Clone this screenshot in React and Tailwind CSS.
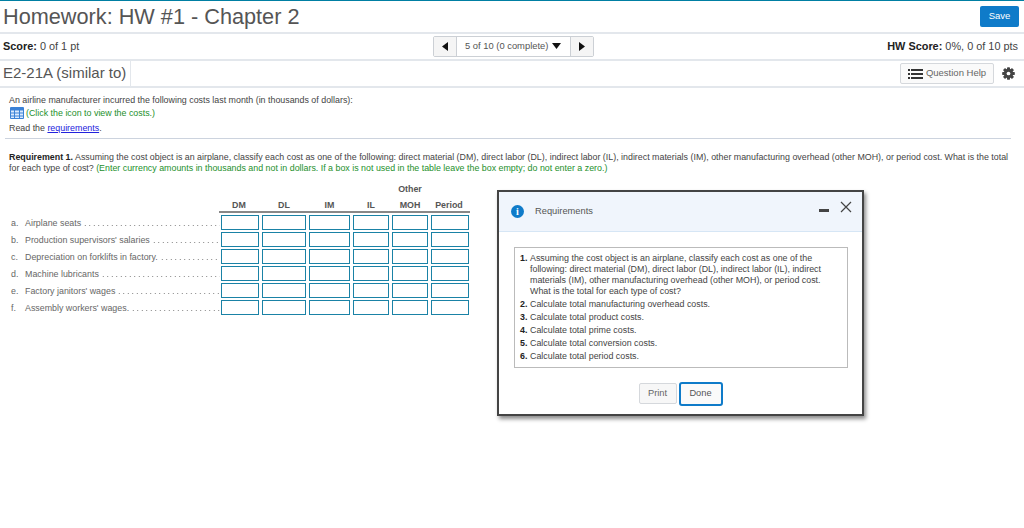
import React from "react";

const rows = [
  ["a.", "Airplane seats"],
  ["b.", "Production supervisors' salaries"],
  ["c.", "Depreciation on forklifts in factory."],
  ["d.", "Machine lubricants"],
  ["e.", "Factory janitors' wages"],
  ["f.", "Assembly workers' wages."],
];
const cols = ["DM", "DL", "IM", "IL", "MOH", "Period"];
const reqs = [
  "Calculate total manufacturing overhead costs.",
  "Calculate total product costs.",
  "Calculate total prime costs.",
  "Calculate total conversion costs.",
  "Calculate total period costs.",
];

function Tri({ d }) {
  return (
    <svg width="10" height="11" viewBox="0 0 10 11" className="block">
      <path d={d} fill="#111" />
    </svg>
  );
}

function Gear() {
  const teeth = [0, 45, 90, 135];
  return (
    <svg width="13" height="13" viewBox="0 0 14 14" className="block">
      {teeth.map((a) => (
        <rect key={a} x="5.4" y="0.2" width="3.2" height="13.6" rx="0.5" fill="#444" transform={`rotate(${a} 7 7)`} />
      ))}
      <circle cx="7" cy="7" r="5" fill="#444" />
      <circle cx="7" cy="7" r="2" fill="#fff" />
    </svg>
  );
}

function ListIcon() {
  return (
    <svg width="15" height="10" viewBox="0 0 15 10" className="block">
      <path d="M0 0h2v2H0zM3 0h12v2H3zM0 4h2v2H0zM3 4h12v2H3zM0 8h2v2H0zM3 8h12v2H3z" fill="#333" />
    </svg>
  );
}

function TableIcon() {
  return (
    <svg width="14" height="12" viewBox="0 0 14 12" className="block">
      <rect width="14" height="12" rx="1" fill="#3b82d6" />
      <path d="M1 3.5h3v2H1zM5 3.5h4v2H5zM10 3.5h3v2h-3zM1 6.5h3v2H1zM5 6.5h4v2H5zM10 6.5h3v2h-3zM1 9.5h3v1.5H1zM5 9.5h4v1.5H5zM10 9.5h3v1.5h-3z" fill="#dbeafe" />
    </svg>
  );
}

export default function App() {
  return (
    <div className="relative h-[528px] w-[1024px] overflow-hidden bg-white font-['Liberation_Sans',Arial,sans-serif] text-[#333]">
      <header className="flex h-[34px] items-center justify-between border-t border-[#007fa3] border-b-2 border-b-[#e3e7ec] pl-[3px] pr-[5px]">
        <h1 className="text-[21.7px] leading-none text-[#555]">Homework: HW #1 - Chapter 2</h1>
        <button className="h-[21px] w-[39px] rounded-[2px] bg-[#0f7bc9] text-[9.5px] text-white">Save</button>
      </header>

      <div className="grid h-[27px] grid-cols-[430px_auto_1fr] items-center border-b-2 border-[#e3e7ec] pl-[3px] pr-[6px] text-[10.9px] text-[#444]">
        <div><b className="text-[#222]">Score:</b> 0 of 1 pt</div>
        <div className="flex h-[21px] items-center rounded-[2px] border border-[#ccd0d5] bg-white">
          <span className="flex h-full w-[23px] items-center justify-center border-r border-[#ccd0d5] bg-[#f5f5f5]"><Tri d="M8 1v9L2 5.500z" /></span>
          <span className="flex items-center gap-[4px] whitespace-nowrap pl-[8px] pr-[9px] text-[9.4px] text-[#555]">
            5 of 10 (0 complete)
            <svg width="9" height="6" viewBox="0 0 9 6" className="block"><path d="M0 0h9L4.500 6z" fill="#111" /></svg>
          </span>
          <span className="flex h-full w-[23px] items-center justify-center border-l border-[#ccd0d5] bg-[#f5f5f5]"><Tri d="M2 1v9l6-4.500z" /></span>
        </div>
        <div className="text-right"><b className="text-[#222]">HW Score:</b> 0%, 0 of 10 pts</div>
      </div>

      <div className="flex h-[27px] items-center justify-between border-b-2 border-[#e3e7ec] pr-[9px]">
        <div className="flex h-full w-[131px] items-center border-r border-[#e3e7ec] pl-[3px] text-[15px] text-[#555]">E2-21A (similar to)</div>
        <div className="flex items-center gap-[8px]">
          <button className="flex h-[21px] w-[94px] items-center justify-center gap-[3px] rounded-[2px] border border-[#d5d8dc] bg-[#fafafa] text-[9.5px] text-[#666]">
            <ListIcon />Question Help
          </button>
          <Gear />
        </div>
      </div>

      <main className="px-[9px] text-[8.87px] leading-[11px]">
        <p className="mt-[7px] text-[#444]">An airline manufacturer incurred the following costs last month (in thousands of dollars):</p>
        <p className="mt-[1px] flex items-center gap-[2px] pl-[1px] text-[#1d8f2c]"><TableIcon />(Click the icon to view the costs.)</p>
        <p className="mt-[4px] text-[#444]">Read the <a className="text-[#2222dd] underline">requirements</a>.</p>
        <hr className="-ml-[4px] mt-[4px] w-[1006px] border-t border-[#ccd3de]" />
        <p className="mt-[13px] w-[1006px] text-[#444]">
          <b className="text-[#222]">Requirement 1.</b> Assuming the cost object is an airplane, classify each cost as one of the following: direct material (DM), direct labor (DL), indirect labor (IL), indirect materials (IM), other manufacturing overhead (other MOH), or period cost. What is the total for each type of cost? <span className="text-[#1d8f2c]">(Enter currency amounts in thousands and not in dollars. If a box is not used in the table leave the box empty; do not enter a zero.)</span>
        </p>

        <div className="mt-[10px] ml-[210px] w-[251px] text-center font-bold text-[#555]">
          <div className="grid grid-cols-[43px_47px_44px_39px_39px_39px]">
            <div className="col-start-5 pr-[3px]">Other</div>
          </div>
          <div className="mt-[5px] grid h-[13px] grid-cols-[43px_47px_44px_39px_39px_39px] border-b-2 border-[#888]">
            {cols.map((c) => (
              <div key={c} className="pr-[3px]">{c}</div>
            ))}
          </div>
        </div>
        <div className="mt-[1px] w-[463px]">
          {rows.map(([k, t]) => (
            <div key={k} className="grid h-[17px] grid-cols-[212px_41px_47px_44px_39px_39px_41px] items-center text-[#666]">
              <div className="flex items-center whitespace-nowrap pl-[2px] pt-[1px]">
                <span className="w-[14px] shrink-0">{k}</span>
                <span className="shrink-0 pr-[2px]">{t}</span>
                <span className="mr-[1px] mt-[5px] h-[3px] min-w-0 flex-1 bg-[radial-gradient(circle,#777_0.7px,transparent_0.9px)] bg-[length:4.5px_3px]" />
              </div>
              {cols.map((c) => (
                <div key={c} className="mr-[3px] h-[15px] border border-[#1a82a6] bg-white" />
              ))}
            </div>
          ))}
        </div>
      </main>

      <section className="absolute left-[497px] top-[190px] h-[226px] w-[367px] border-2 border-[#444] bg-white shadow-[2px_3px_4px_rgba(0,0,0,0.45)]">
        <div className="relative flex h-[40px] items-center border-b border-[#d6e6f5] bg-[#f0f5fc] pl-[12px]">
          <span className="flex h-[13px] w-[13px] items-center justify-center rounded-full bg-[#0f7bc9] font-['Liberation_Serif',serif] text-[10px] font-bold leading-none text-white">i</span>
          <span className="ml-[11px] text-[9.3px] text-[#555]">Requirements</span>
          <span className="absolute left-[320px] top-[17px] h-[3px] w-[10px] bg-[#444]" />
          <svg width="12" height="12" viewBox="0 0 12 12" className="absolute left-[341px] top-[9px]"><path d="M1 1l10 10M11 1L1 11" stroke="#444" strokeWidth="1.2" fill="none" /></svg>
        </div>
        <div className="ml-[15px] mt-[15px] h-[121px] w-[334px] border border-[#bbb] pl-[5px] pt-[5px] text-[8.9px] leading-[11px] text-[#444]">
          <div className="flex">
            <b className="w-[10px] shrink-0 text-[#222]">1.</b>
            <span className="w-[300px]">Assuming the cost object is an airplane, classify each cost as one of the following: direct material (DM), direct labor (DL), indirect labor (IL), indirect materials (IM), other manufacturing overhead (other MOH), or period cost. What is the total for each type of cost?</span>
          </div>
          {reqs.map((r, i) => (
            <div key={r} className="mt-[2px] flex">
              <b className="w-[10px] shrink-0 text-[#222]">{i + 2}.</b>
              <span>{r}</span>
            </div>
          ))}
        </div>
        <div className="mt-[15px] flex justify-center gap-[2px]">
          <button className="h-[21px] w-[38px] rounded-[2px] border border-[#d5d8dc] bg-[#f7f7f7] text-[9.3px] text-[#666]">Print</button>
          <button className="-mt-[1px] h-[24px] w-[44px] rounded-[3px] border-2 border-[#0f7bc9] bg-[#fafafa] text-[9.3px] text-[#555]">Done</button>
        </div>
      </section>
    </div>
  );
}
